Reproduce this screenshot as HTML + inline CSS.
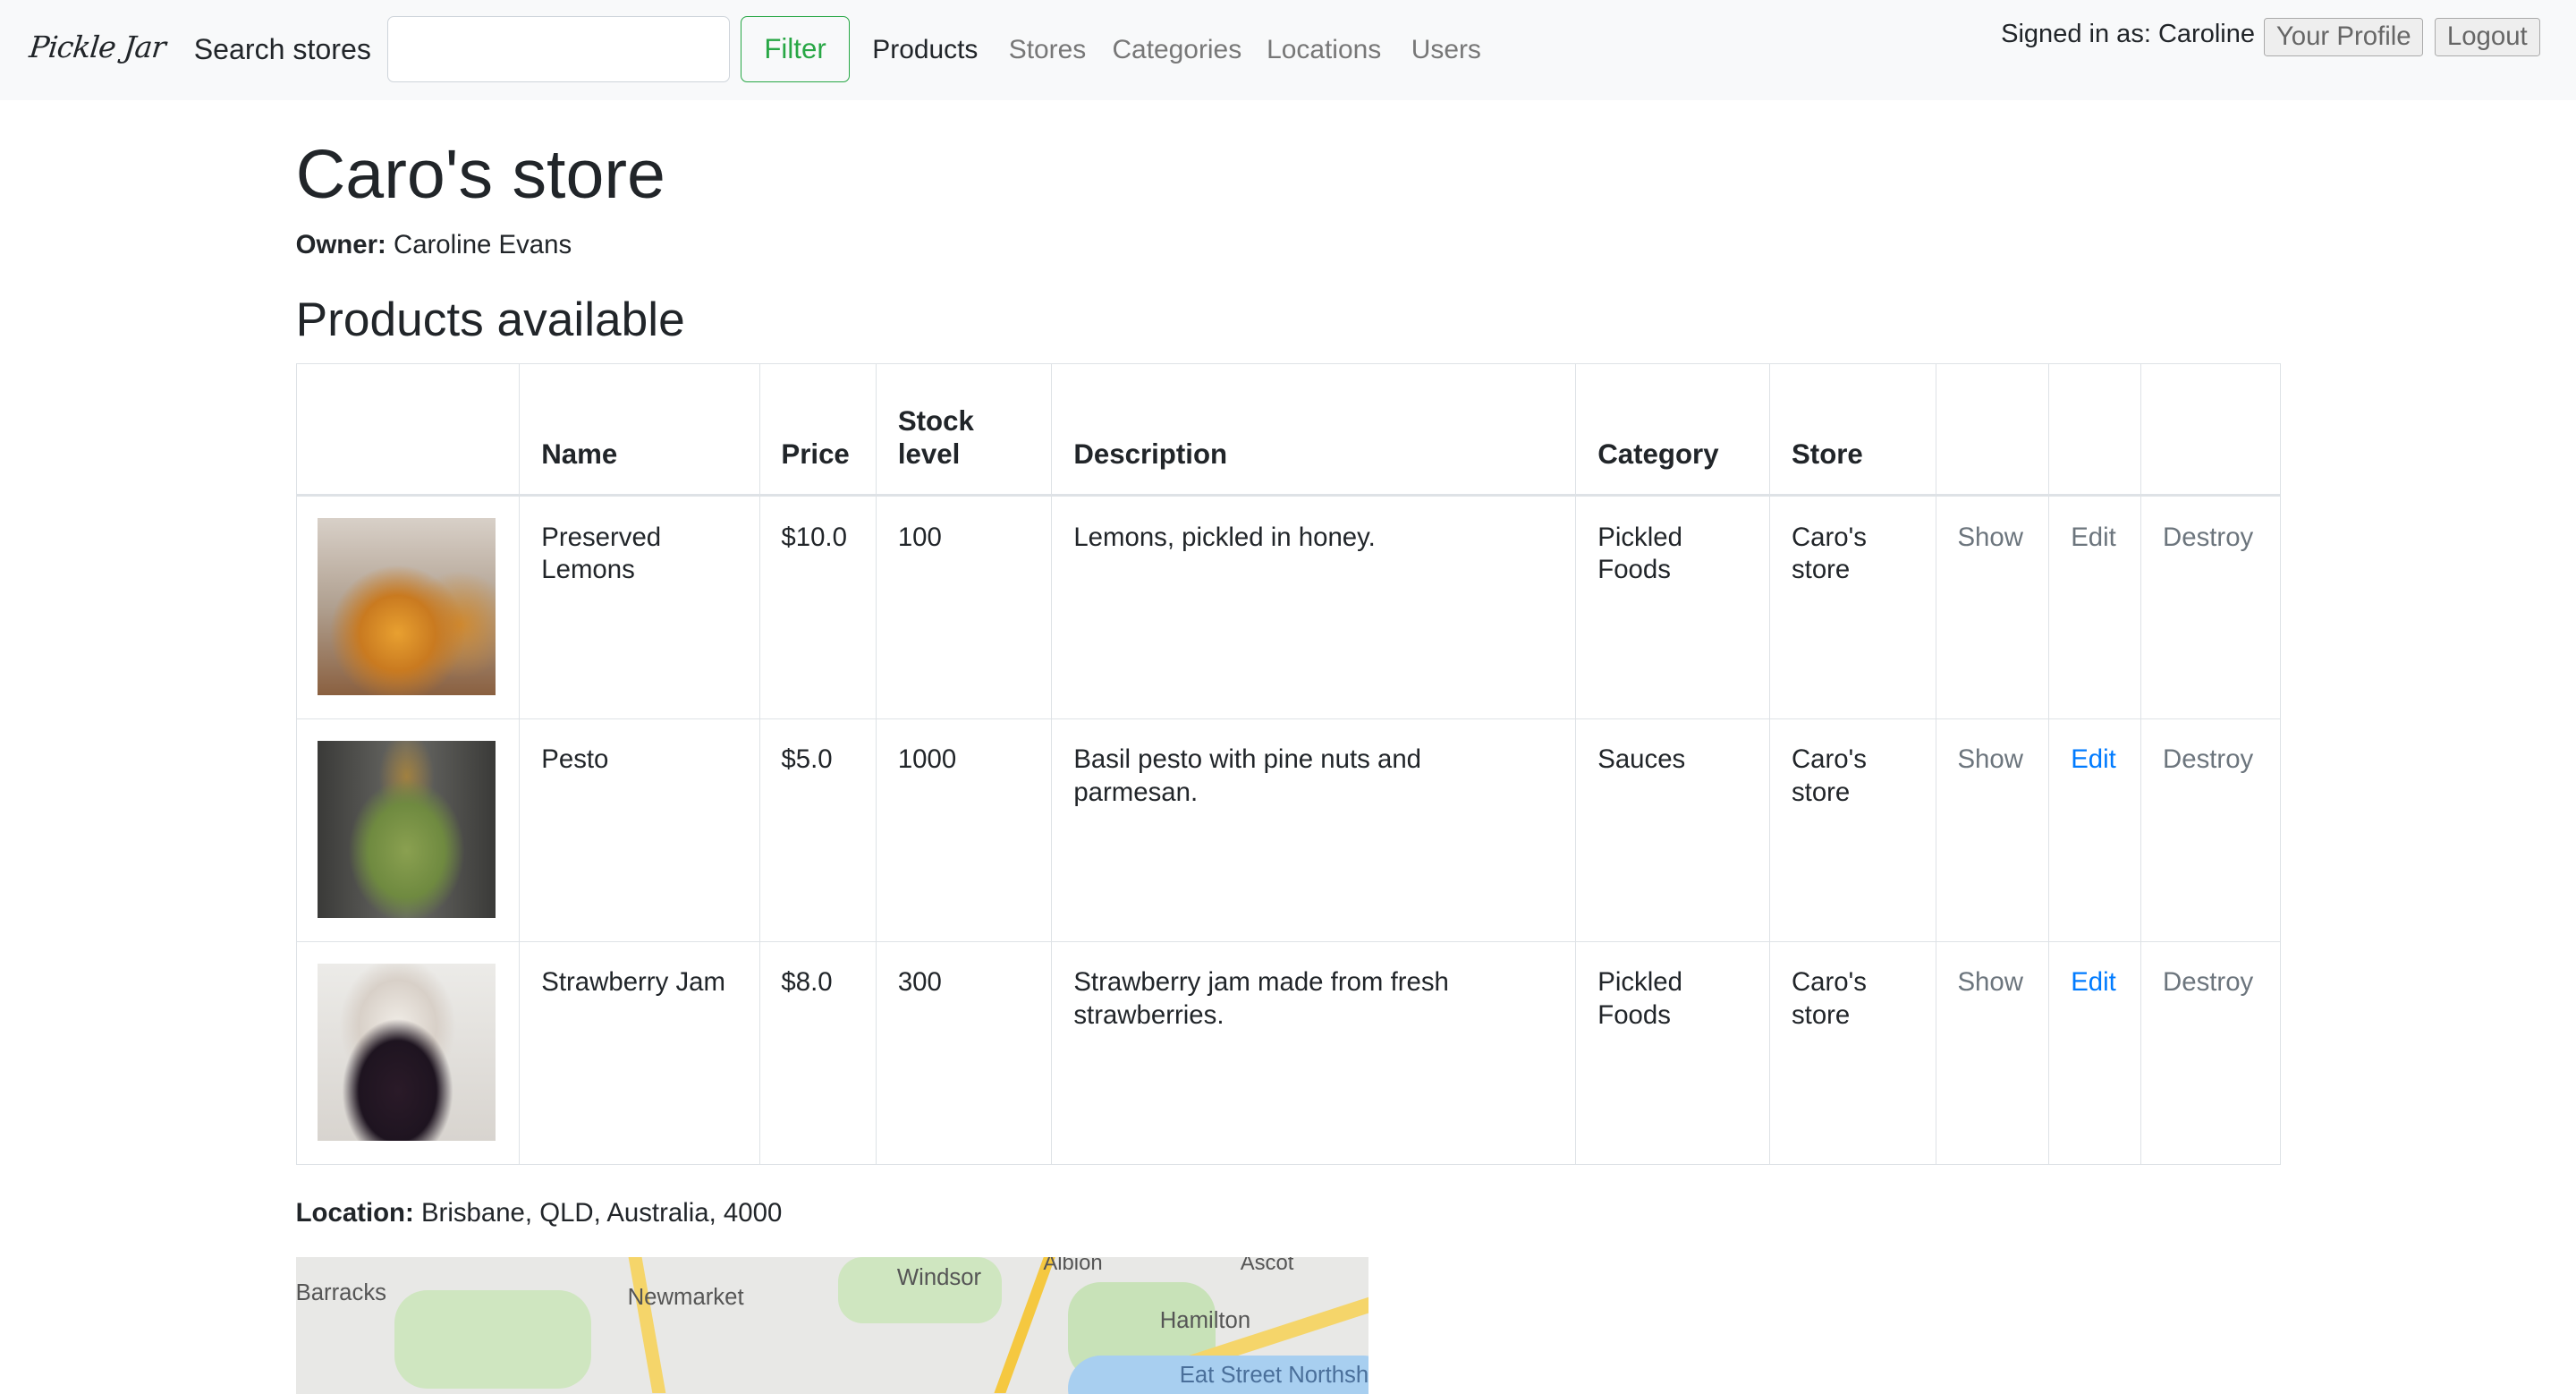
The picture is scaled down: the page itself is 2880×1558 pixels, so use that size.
<!DOCTYPE html>
<html><head><meta charset="utf-8"><style>
html,body{margin:0;padding:0;width:2880px;height:1558px;overflow:hidden;background:#fff}
#w{width:1568px;height:848px;zoom:1.83673;position:relative;font-family:"Liberation Sans",sans-serif;color:#212529;font-size:16px;overflow:hidden}
.nav{position:absolute;left:0;top:0;width:1568px;height:61px;background:#f8f9fa}
.a{position:absolute;white-space:nowrap}
.logo{left:18px;top:18px;font-family:"DejaVu Serif",serif;font-style:italic;font-size:18px;letter-spacing:-0.5px;transform:skewX(-6deg)}
.inp{left:236px;top:10px;width:207px;height:39px;border:1px solid #ced4da;border-radius:4px;background:#fff}
.btn{left:451px;top:10px;width:65px;height:39px;border:1px solid #28a745;border-radius:4px;color:#28a745;font-size:17px;text-align:center;line-height:39px}
.nl{top:21px;font-size:16.3px;color:#777}
.sb{top:11px;height:22px;border:1px solid #aaa;background:#eee;color:#666;font-size:16px;line-height:22px;padding:0 7px;border-radius:2px}
h1{position:absolute;left:180px;top:82px;margin:0;font-size:42px;font-weight:400}
h2{position:absolute;left:180px;top:178px;margin:0;font-size:29px;font-weight:400}
table{position:absolute;left:180px;top:221px;border-collapse:collapse;font-size:16px;table-layout:fixed;width:1208px}
td,th{border:1px solid #dee2e6;padding:15px 13px 12px;vertical-align:top;text-align:left;line-height:20px;overflow:hidden}
th{vertical-align:bottom;height:50px;font-size:17px;border-bottom:2px solid #dee2e6;padding-bottom:14px}
tr.r td{height:108px}
.g{color:#6c757d}.bl{color:#007bff}
.img{width:108px;height:108px;margin:-2px 0 0 0}
</style></head><body><div id="w">
<div class="nav">
<div class="a logo">Pickle Jar</div>
<div class="a" style="left:118px;top:20px;font-size:17.5px">Search stores</div>
<div class="a inp"></div>
<div class="a btn">Filter</div>
<div class="a nl" style="left:531px;color:#212529">Products</div>
<div class="a nl" style="left:614px">Stores</div>
<div class="a nl" style="left:677px">Categories</div>
<div class="a nl" style="left:771px">Locations</div>
<div class="a nl" style="left:859px">Users</div>
<div class="a" style="left:1218px;top:12px;font-size:15.8px">Signed in as: Caroline</div>
<div class="a sb" style="left:1378px">Your Profile</div>
<div class="a sb" style="left:1482px">Logout</div>
</div>
<h1>Caro's store</h1>
<div class="a" style="left:180px;top:140px"><b>Owner:</b> Caroline Evans</div>
<h2>Products available</h2>
<table>
<colgroup><col style="width:136px"><col style="width:146px"><col style="width:71px"><col style="width:107px"><col style="width:319px"><col style="width:118px"><col style="width:101px"><col style="width:69px"><col style="width:56px"><col style="width:85px"></colgroup>
<tr><th></th><th>Name</th><th>Price</th><th>Stock<br>level</th><th>Description</th><th>Category</th><th>Store</th><th></th><th></th><th></th></tr>
<tr class="r"><td><div class="img" style="background:radial-gradient(circle at 45% 65%,#e8a030 0,#c97a20 25%,transparent 45%),radial-gradient(circle at 80% 60%,#d08a30 0,transparent 30%),linear-gradient(#d8d0c8,#b0a090 50%,#8a6040)"></div></td><td>Preserved<br>Lemons</td><td>$10.0</td><td>100</td><td>Lemons, pickled in honey.</td><td>Pickled<br>Foods</td><td>Caro's<br>store</td><td class="g">Show</td><td class="g">Edit</td><td class="g">Destroy</td></tr>
<tr class="r"><td><div class="img" style="background:radial-gradient(ellipse at 50% 62%,#8aa050 0,#6f8a40 30%,transparent 46%),radial-gradient(ellipse at 50% 20%,#a08040 0,transparent 22%),linear-gradient(90deg,#3a3a38,#6a6a66 50%,#3a3a38)"></div></td><td>Pesto</td><td>$5.0</td><td>1000</td><td>Basil pesto with pine nuts and<br>parmesan.</td><td>Sauces</td><td>Caro's<br>store</td><td class="g">Show</td><td class="bl">Edit</td><td class="g">Destroy</td></tr>
<tr class="r"><td><div class="img" style="background:radial-gradient(ellipse at 45% 72%,#2a1a28 0,#1e1420 28%,transparent 40%),radial-gradient(ellipse at 45% 35%,#f0ece6 0,#d8d0c8 28%,transparent 42%),linear-gradient(#ecebe8,#d8d4cf)"></div></td><td>Strawberry Jam</td><td>$8.0</td><td>300</td><td>Strawberry jam made from fresh<br>strawberries.</td><td>Pickled<br>Foods</td><td>Caro's<br>store</td><td class="g">Show</td><td class="bl">Edit</td><td class="g">Destroy</td></tr>
</table>
<div class="a" style="left:180px;top:729px"><b>Location:</b> Brisbane, QLD, Australia, 4000</div>
<div class="a" style="left:180px;top:765px;width:653px;height:83px;background:#e8e8e6;overflow:hidden">
<div class="a" style="left:60px;top:20px;width:120px;height:60px;background:#cfe6c0;border-radius:20px"></div>
<div class="a" style="left:330px;top:0;width:100px;height:40px;background:#cfe6c0;border-radius:15px"></div>
<div class="a" style="left:470px;top:15px;width:90px;height:60px;background:#c8e2b8;border-radius:20px"></div>
<div class="a" style="left:210px;top:0;width:8px;height:83px;background:#f5d56a;transform:skewX(10deg)"></div>
<div class="a" style="left:440px;top:0;width:7px;height:83px;background:#f5c840;transform:skewX(-20deg)"></div>
<div class="a" style="left:540px;top:40px;width:130px;height:9px;background:#f5d56a;transform:rotate(-18deg)"></div>
<div class="a" style="left:470px;top:60px;width:200px;height:40px;background:#a8cff0;border-radius:30px"></div>
<div class="a" style="left:0;top:14px;font-size:14px;color:#555">Barracks</div>
<div class="a" style="left:202px;top:17px;font-size:14px;color:#555">Newmarket</div>
<div class="a" style="left:366px;top:5px;font-size:14px;color:#555">Windsor</div>
<div class="a" style="left:455px;top:-4px;font-size:13px;color:#555">Albion</div>
<div class="a" style="left:575px;top:-4px;font-size:13px;color:#555">Ascot</div>
<div class="a" style="left:526px;top:31px;font-size:14px;color:#555">Hamilton</div>
<div class="a" style="left:538px;top:64px;font-size:14px;color:#4a6f9a">Eat Street Northsh</div>
</div>
</div></body></html>
